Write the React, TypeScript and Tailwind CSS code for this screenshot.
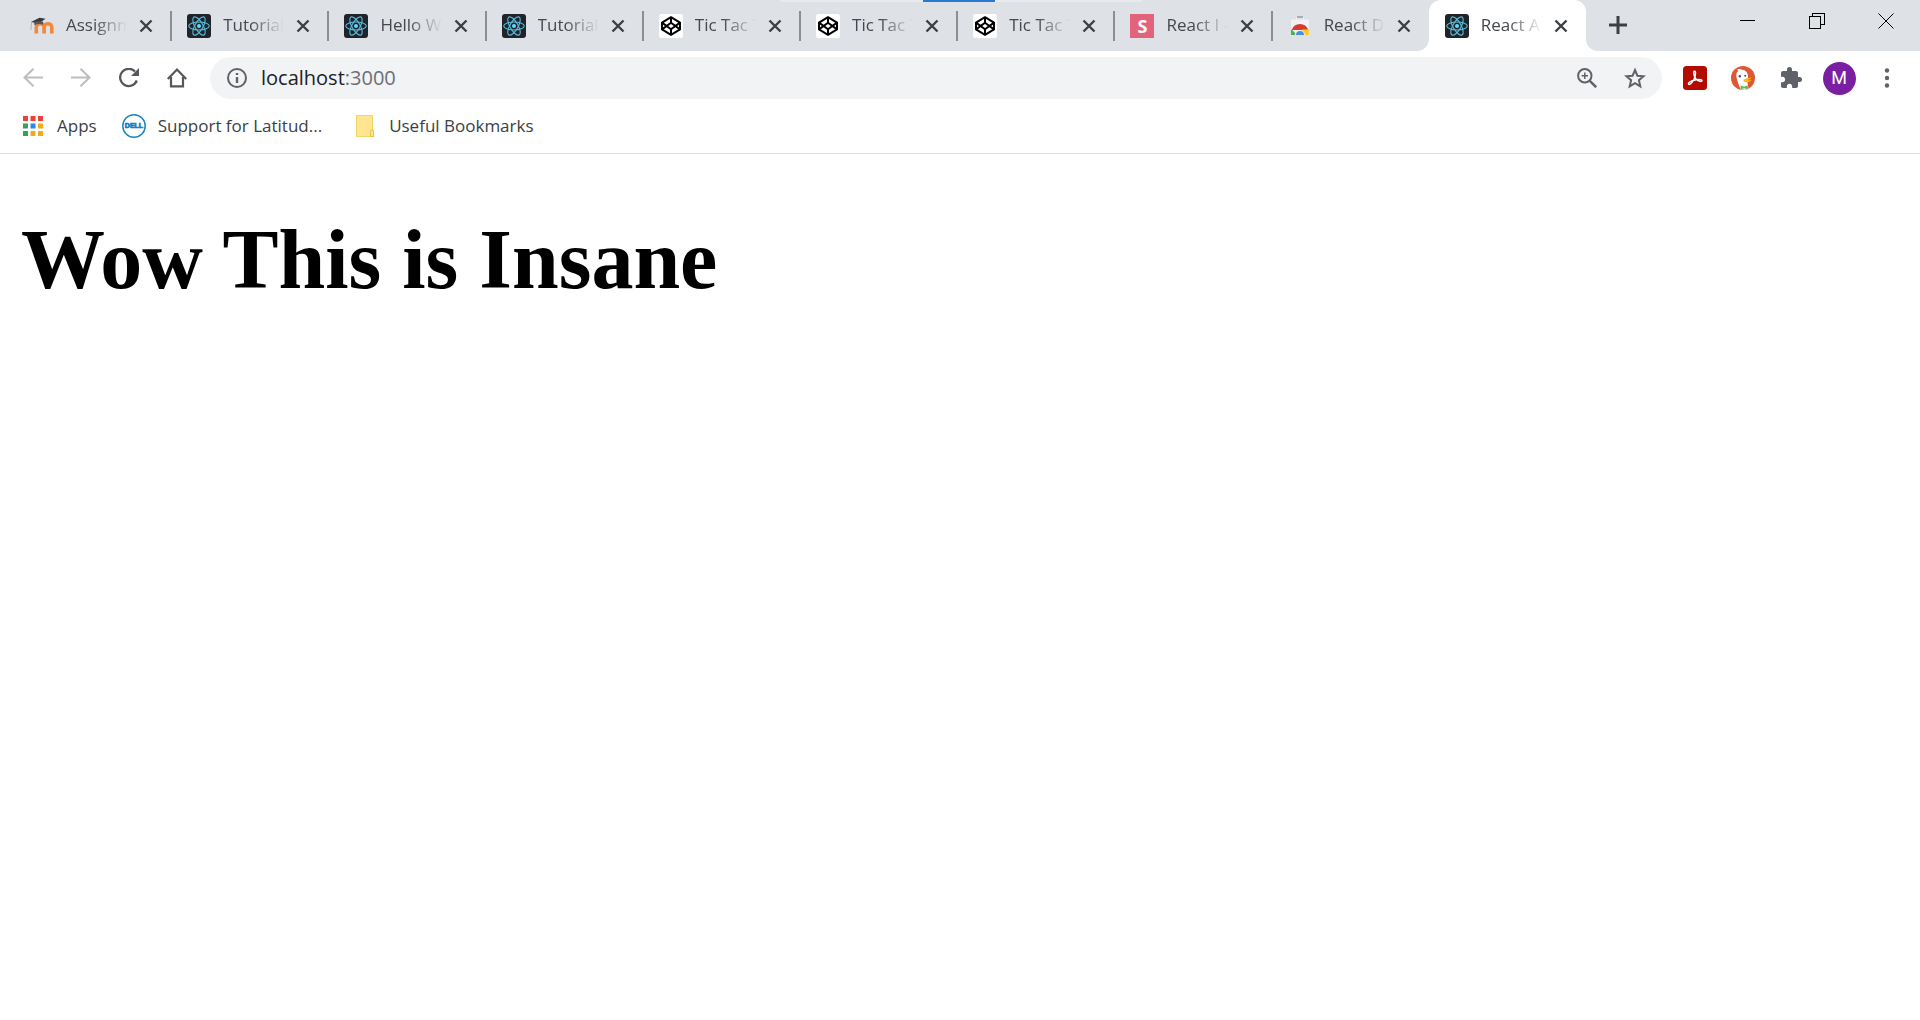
import type { ReactNode } from "react";

type IconName = "moodle" | "react" | "codepen" | "s" | "store";

const tabs: { title: string; icon: IconName }[] = [
  { title: "Assignm", icon: "moodle" },
  { title: "Tutorial:", icon: "react" },
  { title: "Hello W", icon: "react" },
  { title: "Tutorial:", icon: "react" },
  { title: "Tic Tac T", icon: "codepen" },
  { title: "Tic Tac T", icon: "codepen" },
  { title: "Tic Tac T", icon: "codepen" },
  { title: "React I -", icon: "s" },
  { title: "React D", icon: "store" },
  { title: "React A", icon: "react" },
];

function ReactIcon() {
  return (
    <svg viewBox="0 0 24 24" className="size-6">
      <rect width="24" height="24" rx="3" fill="#20232a" />
      <g fill="none" stroke="#61dafb" strokeWidth="1.1" opacity="0.85">
        <ellipse cx="12" cy="12" rx="10.3" ry="4" />
        <ellipse cx="12" cy="12" rx="10.3" ry="4" transform="rotate(60 12 12)" />
        <ellipse cx="12" cy="12" rx="10.3" ry="4" transform="rotate(120 12 12)" />
      </g>
      <circle cx="12" cy="12" r="2" fill="#61dafb" />
    </svg>
  );
}

function CodepenIcon() {
  return (
    <svg viewBox="0 0 24 24" className="size-6">
      <rect width="24" height="24" rx="2.5" fill="#fff" />
      <g fill="none" stroke="#000" strokeWidth="2" strokeLinejoin="round">
        <path d="M12 3.2 21 8.6v6.8l-9 5.4-9-5.4V8.6z" />
        <path d="M12 3.2v5.2M12 15.6v5.2M3 8.6l9 6.600 9-6.600M3 15.4l9-6.600 9 6.600" />
      </g>
    </svg>
  );
}

function MoodleIcon() {
  return (
    <svg viewBox="0 0 24 24" className="size-6">
      <path d="M6.300 19.500v-6c0-5 7.800-5 7.800 0v6M14.100 13.500c0-5 7.700-5 7.700 0v6" fill="none" stroke="#f2883a" strokeWidth="3.600" />
      <path d="M1 8 9.500 3.800l6 1L8.500 9.500z" fill="#38383a" />
      <path d="M4 8c3-1 6-1 9-.5l.3 3.200c-3-1-6-.7-8.800.6z" fill="#58585a" />
      <path d="M1.500 8 1 16" stroke="#b9a89c" strokeWidth="0.800" />
    </svg>
  );
}

function StoreIcon() {
  return (
    <svg viewBox="0 0 24 24" className="size-6">
      <path d="M3 5.500h18V21H3z" fill="#eff1f2" />
      <path d="M8.500 5.500v-2h7v2" fill="none" stroke="#eff1f2" />
      <path d="M9 3h6" stroke="#a9adb2" strokeWidth="2" />
      <path d="M3.800 16a8.600 8.600 0 0 1 16.400 0H12z" fill="#d93a2e" />
      <path d="M3.800 15.500l5 5.500H3V16z" fill="#4caf50" />
      <path d="M14 15.500h6.800V21H13z" fill="#fbcb23" />
      <path d="M7 21a5 5 0 0 1 10 0z" fill="#e6eefb" />
      <path d="M8 21a4 4 0 0 1 8 0z" fill="#4a90e2" />
    </svg>
  );
}

function Favicon({ name }: { name: IconName }) {
  if (name === "react") return <ReactIcon />;
  if (name === "codepen") return <CodepenIcon />;
  if (name === "moodle") return <MoodleIcon />;
  if (name === "store") return <StoreIcon />;
  return (
    <span className="flex size-6 items-center justify-center bg-[#e4637c] text-[18px] leading-6 font-bold text-white">
      S
    </span>
  );
}

function CloseIcon() {
  return (
    <svg viewBox="0 0 14 14" className="size-[14px]">
      <path d="M1.500 1.500l11 11M12.500 1.500l-11 11" stroke="#3c4043" strokeWidth="2.400" />
    </svg>
  );
}

function Tab({ title, icon, active, divider }: { title: string; icon: IconName; active: boolean; divider: boolean }) {
  return (
    <div
      role="tab"
      aria-selected={active}
      className={
        active
          ? "relative flex h-[51px] min-w-0 flex-1 items-center rounded-t-xl bg-white px-4"
          : "relative flex h-[51px] min-w-0 flex-1 items-center px-4"
      }
    >
      <span className="shrink-0">
        <Favicon name={icon} />
      </span>
      <span className="ml-3 flex h-[50px] min-w-0 flex-1 items-start overflow-hidden mask-r-from-45% mask-r-to-100% pt-3 text-[17px] leading-6 whitespace-nowrap text-[#45494d]">
        {title}
      </span>
      <button aria-label={`Close ${title}`} className="ml-[10px] flex h-6 w-[18px] shrink-0 items-center justify-center">
        <CloseIcon />
      </button>
      {divider && <span className="absolute top-[11px] -right-px h-[30px] w-[2px] bg-[#8b8f94]" />}
      {active && (
        <>
          <span className="absolute bottom-0 -left-3 size-3 bg-white">
            <span className="block size-3 rounded-br-xl bg-[#dee1e6]" />
          </span>
          <span className="absolute -right-3 bottom-0 size-3 bg-white">
            <span className="block size-3 rounded-bl-xl bg-[#dee1e6]" />
          </span>
        </>
      )}
    </div>
  );
}

function ToolButton({ label, children }: { label: string; children: ReactNode }) {
  return (
    <button aria-label={label} className="flex h-[42px] w-12 shrink-0 items-center justify-center">
      {children}
    </button>
  );
}

function TabStrip() {
  return (
    <header className="relative flex h-[51px] bg-[#dee1e6] pl-[14px]">
      <div className="absolute top-0 left-[780px] h-[2px] w-[362px] bg-[#e8eaed]" />
      <div className="absolute top-0 left-[923px] h-[2px] w-[72px] bg-[#2b78cf]" />
      <div role="tablist" className="flex min-w-0 flex-1">
        {tabs.map((tab, i) => (
          <Tab key={i} title={tab.title} icon={tab.icon} active={i === tabs.length - 1} divider={i < tabs.length - 2} />
        ))}
      </div>
      <div className="flex w-[334px] shrink-0 justify-between">
        <button aria-label="New tab" className="ml-2 flex h-[50px] w-12 items-center justify-center">
          <svg viewBox="0 0 18 18" className="size-[18px]">
            <path d="M9 0v18M0 9h18" stroke="#3c4043" strokeWidth="3" />
          </svg>
        </button>
        <div className="flex h-[42px]">
          <button aria-label="Minimize" className="flex w-[69px] items-center justify-center">
            <svg viewBox="0 0 16 16" className="size-4" shapeRendering="crispEdges">
              <path d="M0 7.500h15" stroke="#000" />
            </svg>
          </button>
          <button aria-label="Restore" className="flex w-[69px] items-center justify-center">
            <svg viewBox="0 0 16 16" className="size-4" fill="none" stroke="#000" shapeRendering="crispEdges">
              <path d="M.5 3.500h11v12H.5zM3.500 3.500v-3h12v11h-4" />
            </svg>
          </button>
          <button aria-label="Close window" className="flex w-[69px] items-center justify-center">
            <svg viewBox="0 0 16 16" className="size-4">
              <path d="M.5.500l15 15M15.500.500l-15 15" stroke="#000" />
            </svg>
          </button>
        </div>
      </div>
    </header>
  );
}

function Toolbar() {
  return (
    <div className="flex h-[54px] items-center px-[9px]">
      <ToolButton label="Back">
        <svg viewBox="0 0 20 20" className="size-5" fill="none" stroke="#bbbdbf" strokeWidth="2">
          <path d="M20 9.500H2M10.500.800 1.500 9.500l9 8.700" />
        </svg>
      </ToolButton>
      <ToolButton label="Forward">
        <svg viewBox="0 0 20 20" className="size-5" fill="none" stroke="#bbbdbf" strokeWidth="2">
          <path d="M0 9.500h18M9.500.800l9 8.700-9 8.700" />
        </svg>
      </ToolButton>
      <ToolButton label="Reload">
        <svg viewBox="0 0 20 20" className="size-5">
          <path d="M17.800 12.500A8.600 8.600 0 1 1 16 3.500" fill="none" stroke="#54575b" strokeWidth="2.300" />
          <path d="M20 0v8h-8z" fill="#54575b" />
        </svg>
      </ToolButton>
      <ToolButton label="Home">
        <svg viewBox="0 0 20 20" className="size-5" fill="none" stroke="#54575b" strokeWidth="2.200">
          <path d="M.8 11 10 1.600 19.200 11M4 9v9.300h12V9" />
        </svg>
      </ToolButton>
      <div className="mr-[9px] ml-[9px] flex h-[42px] min-w-0 flex-1 items-center rounded-full bg-[#f1f3f4] pr-[3px] pl-[17px]">
        <button aria-label="Site information" className="shrink-0">
          <svg viewBox="0 0 20 20" className="size-5">
            <circle cx="10" cy="10" r="9" fill="none" stroke="#5f6368" strokeWidth="2" />
            <path d="M10 9v6M10 5v2" stroke="#5f6368" strokeWidth="2.400" />
          </svg>
        </button>
        <a href="#address" className="ml-[14px] min-w-0 flex-1 text-[20px] leading-7 text-[#202124]">
          localhost<span className="text-[#6b6f74]">:3000</span>
        </a>
        <ToolButton label="Zoom">
          <svg viewBox="0 0 20 20" className="size-5" fill="none" stroke="#5f6368" strokeWidth="2">
            <circle cx="7.800" cy="7.800" r="6.700" />
            <path d="M12.800 12.800l6.400 6.400" strokeWidth="2.500" />
            <path d="M7.800 4.600v6.400M4.600 7.800H11" strokeWidth="1.500" />
          </svg>
        </ToolButton>
        <ToolButton label="Bookmark this page">
          <svg viewBox="0 0 22 22" className="size-[22px]" fill="none" stroke="#5f6368" strokeWidth="2">
            <path d="M11 3l2.400 5.700 6.200.5-4.700 4 1.400 6.100L11 16.100l-5.300 3.200 1.400-6.100-4.700-4 6.200-.5z" />
          </svg>
        </ToolButton>
      </div>
      <ToolButton label="Adobe Acrobat">
        <svg viewBox="0 0 24 24" className="size-6">
          <rect width="24" height="24" rx="3.500" fill="#b30b00" />
          <path d="M5.700 18.200c-1.300-1.400 2.300-3.200 5.300-4 3.500-.9 7.900-1 8 .4.100 1.700-3.600.6-5.600-1.200-2.200-2-3.500-7.600-2-8.200 1.700-.5 1.300 3.800.1 6.900-1.200 3.200-4.500 7.400-5.800 6.100z" fill="none" stroke="#fff" strokeWidth="1.400" />
        </svg>
      </ToolButton>
      <ToolButton label="DuckDuckGo">
        <svg viewBox="0 0 24 24" className="size-6">
          <circle cx="12" cy="12" r="12" fill="#de5833" />
          <path d="M9.500 23.300C8 19 5 12 5.300 8.500 5.500 6.500 6.500 5.500 7.500 5L6 3.500c2-.8 4-.5 5 .3 3.500.2 6 2.700 6 6.700 0 2.500-.8 4-.5 6l1 6.300c-2 1-5 1.200-8 .5z" fill="#fff" />
          <path d="M12.500 14c1.500-1.800 4.500-2 8-2.600-.8 1.800-3 2.200-4.500 2.600 1.500.4 3 .3 4.500.1-1.500 3-8.500 3-8-.1z" fill="#fdb813" />
          <path d="M9.500 19.500l3.700 1.300 3.500-1.600.3 4-3.800-1-3.500 1z" fill="#62b550" />
          <circle cx="8.800" cy="10.300" r="1.200" fill="#2d4f8e" />
          <circle cx="14.200" cy="9.800" r="1" fill="#2d4f8e" />
        </svg>
      </ToolButton>
      <ToolButton label="Extensions">
        <svg viewBox="1 1 22 22" className="size-[22px]">
          <path
            d="M20.500 11H19V7c0-1.100-.9-2-2-2h-4V3.500a2.500 2.500 0 0 0-5 0V5H4c-1.100 0-1.990.9-1.990 2v3.800H3.500c1.490 0 2.700 1.210 2.700 2.700s-1.210 2.700-2.700 2.700H2V20c0 1.100.9 2 2 2h3.800v-1.500c0-1.490 1.210-2.700 2.700-2.700s2.700 1.210 2.700 2.700V22H17c1.100 0 2-.9 2-2v-4h1.500a2.500 2.500 0 0 0 0-5z"
            fill="#5f6368"
          />
        </svg>
      </ToolButton>
      <ToolButton label="Profile">
        <span className="flex size-[33px] items-center justify-center rounded-full bg-[#7b1fa2] font-[Roboto] text-[18px] leading-6 text-white">
          M
        </span>
      </ToolButton>
      <ToolButton label="Menu">
        <svg viewBox="0 0 6 20" className="h-5 w-[6px]" fill="#5f6368">
          <circle cx="3" cy="2.500" r="2.200" />
          <circle cx="3" cy="10" r="2.200" />
          <circle cx="3" cy="17.500" r="2.200" />
        </svg>
      </ToolButton>
    </div>
  );
}

const appColors = ["#ea4335", "#ea4335", "#ea4335", "#34a05a", "#2f86eb", "#f2a91c", "#34a05a", "#f2a91c", "#f2a91c"];

function Bookmarks() {
  return (
    <nav aria-label="Bookmarks" className="flex h-[49px] items-start border-b border-[#dadce0] pl-[23px] text-[17px] leading-[42px] text-[#3c4043]">
      <a href="#apps" className="flex items-center">
        <svg viewBox="0 0 20 20" className="mr-[14px] size-5">
          {appColors.map((c, i) => (
            <rect key={i} x={(i % 3) * 7.5} y={Math.floor(i / 3) * 7.5} width="5" height="5" fill={c} />
          ))}
        </svg>
        Apps
      </a>
      <a href="#support" className="ml-[25px] flex items-center">
        <svg viewBox="0 0 24 24" className="mr-3 size-6">
          <circle cx="12" cy="12" r="11.200" fill="#fff" stroke="#1b86c4" strokeWidth="1.500" />
          <text x="12" y="14.400" textAnchor="middle" fontFamily="Liberation Sans" fontWeight="700" fontSize="7" fill="#0c7fc2" stroke="#0c7fc2" strokeWidth="0.700">
            DELL
          </text>
        </svg>
        Support for Latitud...
      </a>
      <a href="#useful" className="ml-[33px] flex items-center">
        <svg viewBox="0 0 20 22" className="mr-[14px] h-[22px] w-5">
          <path d="M1.500.500h16v15h1v6h-17z" fill="#ffe591" stroke="#f3d565" />
          <path d="M15.500 21v-4.500q0-1.500 1.500-1.500t1.500 1.500v5h-3" fill="none" stroke="#e8c23a" />
        </svg>
        Useful Bookmarks
      </a>
    </nav>
  );
}

export default function App() {
  return (
    <div className="min-h-screen bg-white font-['Open_Sans',sans-serif]">
      <TabStrip />
      <Toolbar />
      <Bookmarks />
      <main className="px-[21px] pt-14">
        <h1 className="font-['Liberation_Serif',serif] text-[84px] leading-25 font-bold text-black">Wow This is Insane</h1>
      </main>
    </div>
  );
}
